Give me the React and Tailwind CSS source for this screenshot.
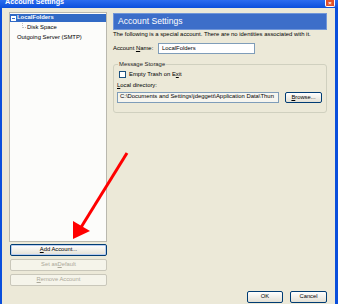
import React from 'react';

const font = { fontFamily: '"Liberation Sans", Arial, sans-serif' };

function XpButton({ children, disabled, focused, className = '' }) {
  const base = 'flex items-center justify-center rounded-[2px] border text-[5.8px] leading-none';
  const look = disabled
    ? 'border-[#c9c7ba] bg-[#f5f4ea] text-[#aca899]'
    : 'border-[#003c74] bg-gradient-to-b from-white to-[#e3e0d5] text-black';
  return (
    <div className={`${base} ${look} ${focused ? 'shadow-[inset_0_0_0_1px_#b9cdf0]' : ''} ${className}`}>
      {children}
    </div>
  );
}

export default function App() {
  return (
    <div
      className="relative w-[338px] h-[304px] overflow-hidden bg-[#0a4fdc] flex flex-col"
      style={font}
    >
      {/* title bar, top is cut off */}
      <div className="h-[8px] flex items-start justify-between bg-gradient-to-b from-[#2a6cf0] to-[#0a4fdc] overflow-hidden">
        <span className="ml-[5px] -mt-[2px] text-[7.2px] font-bold text-white leading-[8px] whitespace-nowrap">
          Account Settings
        </span>
        <div className="mr-[3px] w-[10px] h-[7px] bg-[#e0502a] border border-white border-t-0 rounded-b-[2px] flex items-center justify-center text-white text-[6px] font-bold leading-none">
          ×
        </div>
      </div>

      {/* window body */}
      <div className="flex-1 ml-[2px] mr-[3px] bg-[#ece9d8] flex flex-col">
        <div className="flex mt-[4px] ml-[7px] mr-[8px] gap-[6px]">
          {/* left column */}
          <div className="w-[98px] flex flex-col">
            <div className="h-[230px] bg-[#fcfcfa] border border-[#b9b8ae] flex flex-col text-[5.9px] leading-none">
              <div className="mt-[1px] h-[8px] bg-[#316ac5] flex items-center text-white font-bold">
                <span className="ml-[1px] w-[5px] h-[5px] bg-white flex items-center justify-center">
                  <span className="w-[3px] h-[1px] bg-[#316ac5]" />
                </span>
                <span className="ml-[1px]">LocalFolders</span>
              </div>
              <div className="mt-[1px] h-[10px] flex items-center">
                <span className="ml-[12px] w-[4px] h-[5px] border-l border-b border-dotted border-[#c0c0c0] self-start" />
                <span className="ml-[1px]">Disk Space</span>
              </div>
              <div className="h-[10px] flex items-center">
                <span className="ml-[7px]">Outgoing Server (SMTP)</span>
              </div>
            </div>
            <XpButton focused className="mt-[2px] ml-[1px] h-[12px]">
              <span><span className="underline">A</span>dd Account...</span>
            </XpButton>
            <XpButton disabled className="mt-[3px] ml-[1px] h-[12px]">
              Set as <span className="underline">D</span>efault
            </XpButton>
            <XpButton disabled className="mt-[3px] ml-[1px] h-[12px]">
              <span><span className="underline">R</span>emove Account</span>
            </XpButton>
          </div>

          {/* right column */}
          <div className="w-[214px] flex flex-col text-[5.9px] leading-none text-black">
            <div className="mt-[1px] h-[17px] bg-[#3d6ec9] border border-[#7196d8] flex items-center">
              <span className="ml-[4px] text-[8.6px] text-white">Account Settings</span>
            </div>
            <div className="h-[10px] flex items-center whitespace-nowrap">
              The following is a special account. There are no identities associated with it.
            </div>
            <div className="mt-[3px] h-[11px] flex items-center">
              <span className="w-[45px]">
                Account <span className="underline">N</span>ame:
              </span>
              <div className="w-[97px] h-[11px] bg-white border border-[#7f9db9] flex items-center pl-[3px]">
                LocalFolders
              </div>
            </div>
            <fieldset className="mt-[7px] h-[52px] border border-[#d0d0bf] rounded-[3px] px-[3px] pb-0 mx-0">
              <legend className="ml-[1px] px-[1px] text-[5.9px] leading-[6px] text-[#222]">Message Storage</legend>
              <div className="mt-[4px] flex items-center">
                <span className="ml-[2px] w-[7px] h-[7px] bg-white border border-[#1c5180]" />
                <span className="ml-[3px]">Empty Trash on E<span className="underline">x</span>it</span>
              </div>
              <div className="mt-[5px]">
                <span className="underline">L</span>ocal directory:
              </div>
              <div className="mt-[3px] flex items-center">
                <div className="w-[162px] h-[11px] bg-[#f6f5ef] border border-[#7f9db9] flex items-center pl-[2px] overflow-hidden whitespace-nowrap">
                  C:\Documents and Settings\jdeggett\Application Data\Thun
                </div>
                <XpButton className="ml-[6px] w-[37px] h-[11px]">
                  <span><span className="underline">B</span>rowse...</span>
                </XpButton>
              </div>
            </fieldset>
          </div>
        </div>

        {/* dialog buttons */}
        <div className="mt-[5px] mr-[8px] flex justify-end gap-[7px]">
          <XpButton className="w-[36px] h-[12px]">OK</XpButton>
          <XpButton className="w-[37px] h-[12px]">Cancel</XpButton>
        </div>
      </div>

      {/* red annotation arrow */}
      <svg className="absolute left-0 top-0 pointer-events-none" width="338" height="304">
        <line x1="127" y1="153" x2="80" y2="229" stroke="#ff0000" strokeWidth="3" />
        <polygon points="73,239 73,221 90,231" fill="#ff0000" />
      </svg>
    </div>
  );
}
